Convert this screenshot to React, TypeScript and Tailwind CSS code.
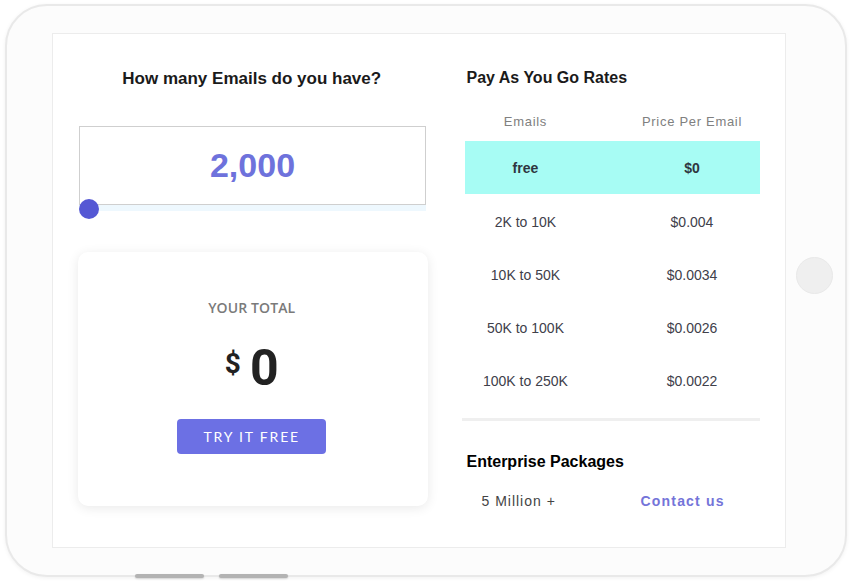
import React from "react";

const rows = [
  { e: "2K to 10K", p: "$0.004" },
  { e: "10K to 50K", p: "$0.0034" },
  { e: "50K to 100K", p: "$0.0026" },
  { e: "100K to 250K", p: "$0.0022" },
];

export default function App() {
  return (
    <div className="w-[853px] h-[585px] bg-white pt-[4px] pl-[5px] overflow-hidden" style={{ fontFamily: '"Liberation Sans", Arial, sans-serif' }}>
      <div className="relative w-[842px] h-[573px] rounded-[42px] border-2 border-[#e9e9e9] bg-[#fcfcfc] shadow-[0_1px_4px_rgba(0,0,0,0.06)] flex">
        {/* screen */}
        <div className="ml-[45px] mt-[27px] w-[734px] h-[515px] border border-[#ececec] bg-white flex px-[25px]">
          {/* left column */}
          <div className="w-[351px] flex flex-col">
            <h2 className="pt-[35px] pr-[3px] text-center text-[17px] leading-[20px] font-bold text-[#1a1a1a]">How many Emails do you have?</h2>
            <div className="mt-[37px] ml-[1px] w-[347px] relative">
              <div className="h-[79px] border border-[#cfcfcf] flex items-center justify-center">
                <span className="text-[34px] font-bold text-[#6e72dc] leading-none mt-[-2px]">2,000</span>
              </div>
              <div className="h-[6px] bg-[#eef8fe]" />
              <div className="absolute left-0 top-[73px] w-[20px] h-[20px] rounded-full bg-[#5558d4]" />
            </div>
            <div className="mt-[41px] h-[254px] rounded-[10px] bg-white shadow-[0_2px_12px_rgba(0,0,0,0.09)] flex flex-col items-center pt-[46px] pr-[3px]">
              <div className="text-[14px] leading-[20px] font-semibold tracking-[0.1px] text-[#7a7a7a]" style={{ fontFamily: '"Open Sans", sans-serif' }}>YOUR TOTAL</div>
              <div className="mt-[25px] flex items-start text-[#222]" style={{ fontFamily: 'Roboto, sans-serif' }}>
                <span className="mt-[7px] mr-[9px] text-[28px] leading-none font-bold">$</span>
                <span className="text-[50px] leading-none font-bold">0</span>
              </div>
              <button className="mt-[26px] w-[149px] h-[35px] rounded-[4px] bg-[#6c70e4] text-white text-[14px] tracking-[1.8px]" style={{ fontFamily: 'Lato, sans-serif' }}>TRY IT FREE</button>
            </div>
          </div>
          {/* right column */}
          <div className="ml-[34px] w-[298px] flex flex-col">
            <h3 className="pt-[34px] pl-[4px] text-[16px] leading-[20px] font-bold text-[#1a1a1a]">Pay As You Go Rates</h3>
            <div className="mt-[13px] ml-[3px]">
              <div className="h-[40px] pt-[2px] grid grid-cols-[120px_136px] justify-between items-center text-[13px] tracking-[0.7px] text-[#808080]">
                <span className="text-center">Emails</span>
                <span className="text-center">Price Per Email</span>
              </div>
              <div className="h-[53px] pt-[2px] bg-[#a7fcf4] grid grid-cols-[120px_136px] justify-between items-center text-[14px] font-bold text-[#2f3640]">
                <span className="text-center">free</span>
                <span className="text-center">$0</span>
              </div>
              {rows.map((r) => (
                <div key={r.e} className="h-[53px] pt-[4px] grid grid-cols-[120px_136px] justify-between items-center text-[14px] text-[#40404a]">
                  <span className="text-center">{r.e}</span>
                  <span className="text-center">{r.p}</span>
                </div>
              ))}
            </div>
            <div className="mt-[12px] h-[3px] bg-[#efefef]" />
            <h3 className="mt-[31px] pl-[4px] text-[16px] leading-[20px] font-bold text-black">Enterprise Packages</h3>
            <div className="mt-[19px] flex items-center text-[14px] leading-[20px] tracking-[1px]">
              <span className="ml-[19px] w-[159px] text-[#444]">5 Million +</span>
              <span className="font-bold tracking-[1.2px] text-[#7474d9]">Contact us</span>
            </div>
          </div>
        </div>
        {/* home button */}
        <div className="flex-1 flex flex-col items-center pt-[251px] pr-[2px]">
          <div className="w-[37px] h-[37px] rounded-full bg-[#efefef] border border-[#e9e9e9]" />
        </div>
        {/* bottom hardware buttons */}
        <div className="absolute left-[128px] bottom-[-3px] w-[69px] h-[4px] rounded-full bg-[#b3b3b3] shadow-[0_1px_2px_rgba(0,0,0,0.15)]" />
        <div className="absolute left-[212px] bottom-[-3px] w-[69px] h-[4px] rounded-full bg-[#b3b3b3] shadow-[0_1px_2px_rgba(0,0,0,0.15)]" />
      </div>
    </div>
  );
}
